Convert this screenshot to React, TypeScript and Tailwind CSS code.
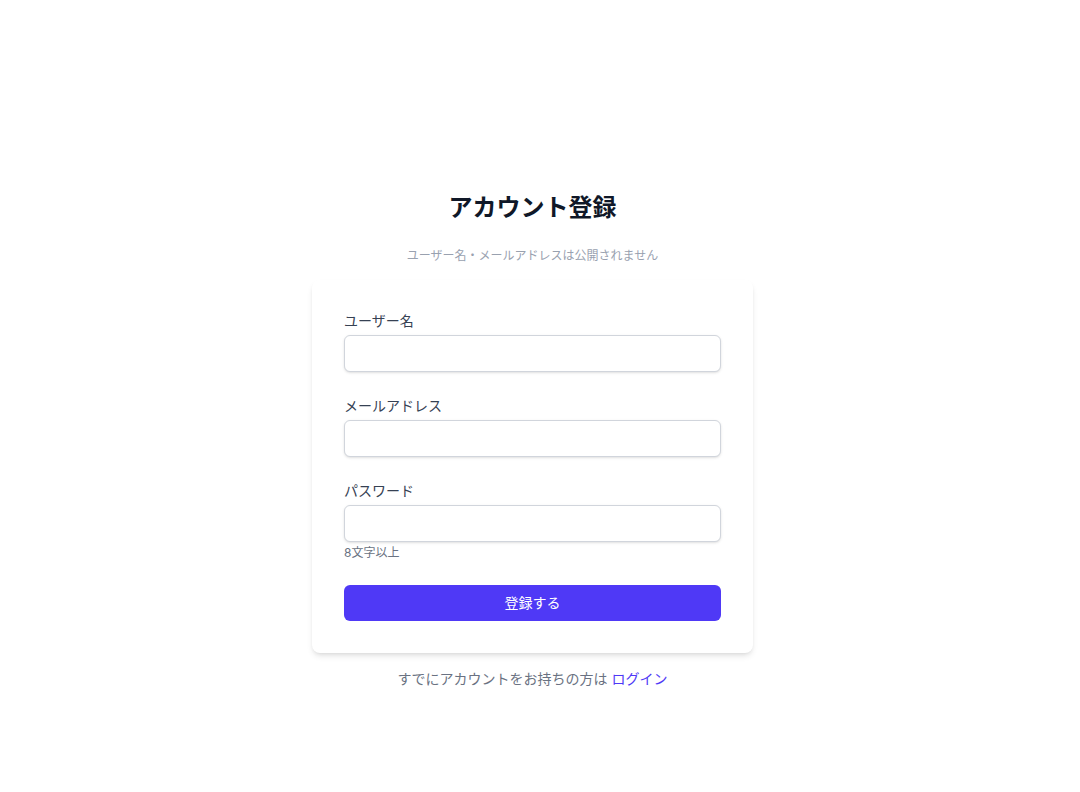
import React from 'react'

const font = { fontFamily: 'Inter, "Noto Sans CJK JP", sans-serif' }

function Field({ label, type, hint }: { label: string; type: string; hint?: string }) {
  return (
    <div>
      <label className="block h-5 text-sm leading-5 text-gray-700">{label}</label>
      <input
        type={type}
        className="mt-1 block h-[37px] w-full rounded-md border border-gray-300 bg-white px-3 text-sm shadow-sm outline-none"
      />
      {hint && <p className="mt-[3px] h-4 text-xs leading-4 text-gray-500">{hint}</p>}
    </div>
  )
}

export default function App() {
  return (
    <div className="min-h-screen bg-white pr-[15px] pt-[192px]" style={font}>
      <div className="mx-auto flex w-[441px] flex-col items-center">
        <h1 className="h-8 text-2xl font-bold leading-8 text-gray-900">アカウント登録</h1>
        <p className="mt-6 h-4 text-xs leading-4 text-gray-400">ユーザー名・メールアドレスは公開されません</p>

        <form className="mt-4 w-full rounded-lg bg-white px-8 pb-8 pt-[31px] shadow-md">
          <div className="space-y-6">
            <Field label="ユーザー名" type="text" />
            <Field label="メールアドレス" type="email" />
            <Field label="パスワード" type="password" hint="8文字以上" />
          </div>
          <button
            type="button"
            className="mt-6 flex h-[36px] w-full items-center justify-center rounded-md bg-indigo-600 text-sm text-white"
          >
            登録する
          </button>
        </form>

        <p className="mt-4 h-5 text-sm leading-5 text-gray-500">
          すでにアカウントをお持ちの方は <a href="#" className="text-indigo-600">ログイン</a>
        </p>
      </div>
    </div>
  )
}
